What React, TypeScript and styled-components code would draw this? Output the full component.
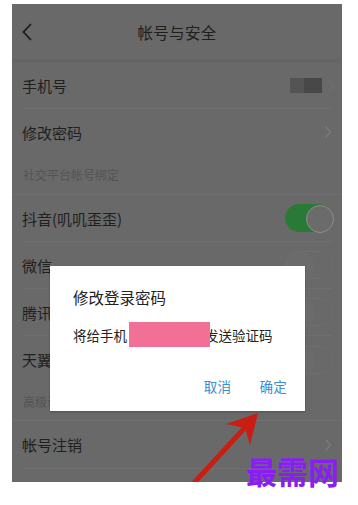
import React from "react";
import styled, { createGlobalStyle } from "styled-components";

const Global = createGlobalStyle`
  html, body { margin: 0; padding: 0; background: #ffffff; }
  body { font-family: "Noto Sans CJK SC", "Noto Sans", sans-serif; }
  * { box-sizing: border-box; }
`;

const Page = styled.div`
  position: relative;
  width: 358px;
  height: 505px;
  padding: 4px 16px 0 12px;
  background: #ffffff;
`;

const Phone = styled.div`
  position: relative;
  width: 330px;
  height: 478px;
  background: #696969;
  overflow: hidden;
  display: flex;
  flex-direction: column;
`;

const Header = styled.div`
  height: 56px;
  flex: none;
  display: grid;
  grid-template-columns: 40px 1fr 40px;
  align-items: center;
  border-bottom: 1px solid #646464;
  box-shadow: 0 2px 3px rgba(0, 0, 0, 0.06);
`;

const Back = styled.div`
  padding-left: 9px;
  display: flex;
  align-items: center;
`;

const Title = styled.div`
  text-align: center;
  font-size: 15.5px;
  color: #1e1e1e;
  letter-spacing: 0.3px;
`;

const Spacer = styled.div<{ $h: number }>`
  height: ${(p) => p.$h}px;
  flex: none;
`;

const Row = styled.div<{ $h: number; $line?: boolean }>`
  height: ${(p) => p.$h}px;
  flex: none;
  margin: 0 10px;
  display: flex;
  align-items: center;
  justify-content: space-between;
  border-bottom: ${(p) => (p.$line ? "1px solid #6f6f6f" : "none")};
`;

const Label = styled.span`
  font-size: 15px;
  color: #1f1f1f;
`;

const Section = styled.div<{ $h: number }>`
  height: ${(p) => p.$h}px;
  flex: none;
  padding: 0 11px;
  display: flex;
  align-items: center;
  font-size: 12px;
  color: #545454;
  border-bottom: 1px solid #6f6f6f;
`;

const Right = styled.div`
  display: flex;
  align-items: center;
  gap: 5px;
  margin-right: -3px;
`;

const Masked = styled.div`
  width: 32px;
  height: 15px;
  background: linear-gradient(90deg, #545454 0 45%, #484848 45% 100%);
  filter: blur(0.6px);
`;

const Toggle = styled.div<{ $on?: boolean }>`
  position: relative;
  width: 48px;
  height: 28px;
  margin-right: -1px;
  border-radius: 14px;
  background: ${(p) => (p.$on ? "#2a7a37" : "transparent")};
  border: 1px solid ${(p) => (p.$on ? "#2a7a37" : "#6e6e6e")};
  &::after {
    content: "";
    position: absolute;
    top: 0px;
    left: ${(p) => (p.$on ? "20px" : "0px")};
    width: 26px;
    height: 26px;
    border-radius: 50%;
    background: #6b6b6b;
    border: 1px solid ${(p) => (p.$on ? "#8d8d8d" : "#6e6e6e")};
  }
`;

const Dialog = styled.div`
  position: absolute;
  left: 38px;
  top: 262px;
  width: 255px;
  height: 145px;
  background: #ffffff;
  box-shadow: 0 1px 2px rgba(0, 0, 0, 0.25);
  display: flex;
  flex-direction: column;
  padding: 20px 18px 0 23px;
`;

const DialogTitle = styled.div`
  font-size: 15.5px;
  color: #222222;
  line-height: 22px;
`;

const DialogBody = styled.div`
  margin-top: 14px;
  font-size: 13.5px;
  color: #222222;
  line-height: 20px;
  display: flex;
  align-items: center;
`;

const Redact = styled.span`
  display: inline-block;
  width: 81px;
  height: 25px;
  margin: 0 -5px 0 2px;
  background: #f26f95;
  position: relative;
  z-index: 1;
`;

const Actions = styled.div`
  margin-top: auto;
  margin-bottom: 15px;
  display: flex;
  justify-content: flex-end;
  gap: 28px;
`;

const ActionBtn = styled.span`
  font-size: 13.5px;
  color: #3b8ed0;
  letter-spacing: 0.3px;
`;

const ArrowSvg = styled.svg`
  position: absolute;
  left: 0;
  top: 0;
  pointer-events: none;
`;

const Watermark = styled.div`
  position: absolute;
  left: 246px;
  top: 455px;
  font-family: "Noto Sans CJK SC", sans-serif;
  font-weight: 700;
  font-size: 31px;
  line-height: 1;
  color: #8a1ef2;
`;

const Chevron = ({ color = "#7b7b7b" }: { color?: string }) => (
  <svg width="8" height="14" viewBox="0 0 8 14">
    <path d="M1.5 1.5 L6.5 7 L1.5 12.5" fill="none" stroke={color} strokeWidth="1.3" />
  </svg>
);

export default function App() {
  return (
    <>
      <Global />
      <Page>
        <Phone>
          <Header>
            <Back>
              <svg width="12" height="20" viewBox="0 0 12 20">
                <path d="M10 2 L2.5 10 L10 18" fill="none" stroke="#1c1c1c" strokeWidth="1.8" />
              </svg>
            </Back>
            <Title>帐号与安全</Title>
            <div />
          </Header>
          <Spacer $h={3} />
          <Row $h={46} $line>
            <Label>手机号</Label>
            <Right>
              <Masked />
              <Chevron color="#6e6e6e" />
            </Right>
          </Row>
          <Row $h={46}>
            <Label>修改密码</Label>
            <Chevron />
          </Row>
          <Section $h={40}>社交平台帐号绑定</Section>
          <Row $h={47} $line>
            <Label>抖音(叽叽歪歪)</Label>
            <Toggle $on />
          </Row>
          <Row $h={47} $line>
            <Label>微信</Label>
            <Toggle />
          </Row>
          <Row $h={47} $line>
            <Label>腾讯QQ</Label>
            <Toggle />
          </Row>
          <Row $h={47}>
            <Label>天翼账号</Label>
            <Toggle />
          </Row>
          <Section $h={38}>高级设置</Section>
          <Row $h={48} $line>
            <Label>帐号注销</Label>
            <Chevron />
          </Row>

          <Dialog>
            <DialogTitle>修改登录密码</DialogTitle>
            <DialogBody>
              将给手机<Redact />发送验证码
            </DialogBody>
            <Actions>
              <ActionBtn>取消</ActionBtn>
              <ActionBtn>确定</ActionBtn>
            </Actions>
          </Dialog>

          <ArrowSvg width="330" height="478" viewBox="0 0 330 478">
            <line x1="170" y1="492" x2="238" y2="418" stroke="#c81e14" strokeWidth="5" strokeLinecap="round" />
            <polygon points="246,409 214,420 233,424 238,441" fill="#c81e14" />
          </ArrowSvg>
        </Phone>
        <Watermark>最需网</Watermark>
      </Page>
    </>
  );
}
